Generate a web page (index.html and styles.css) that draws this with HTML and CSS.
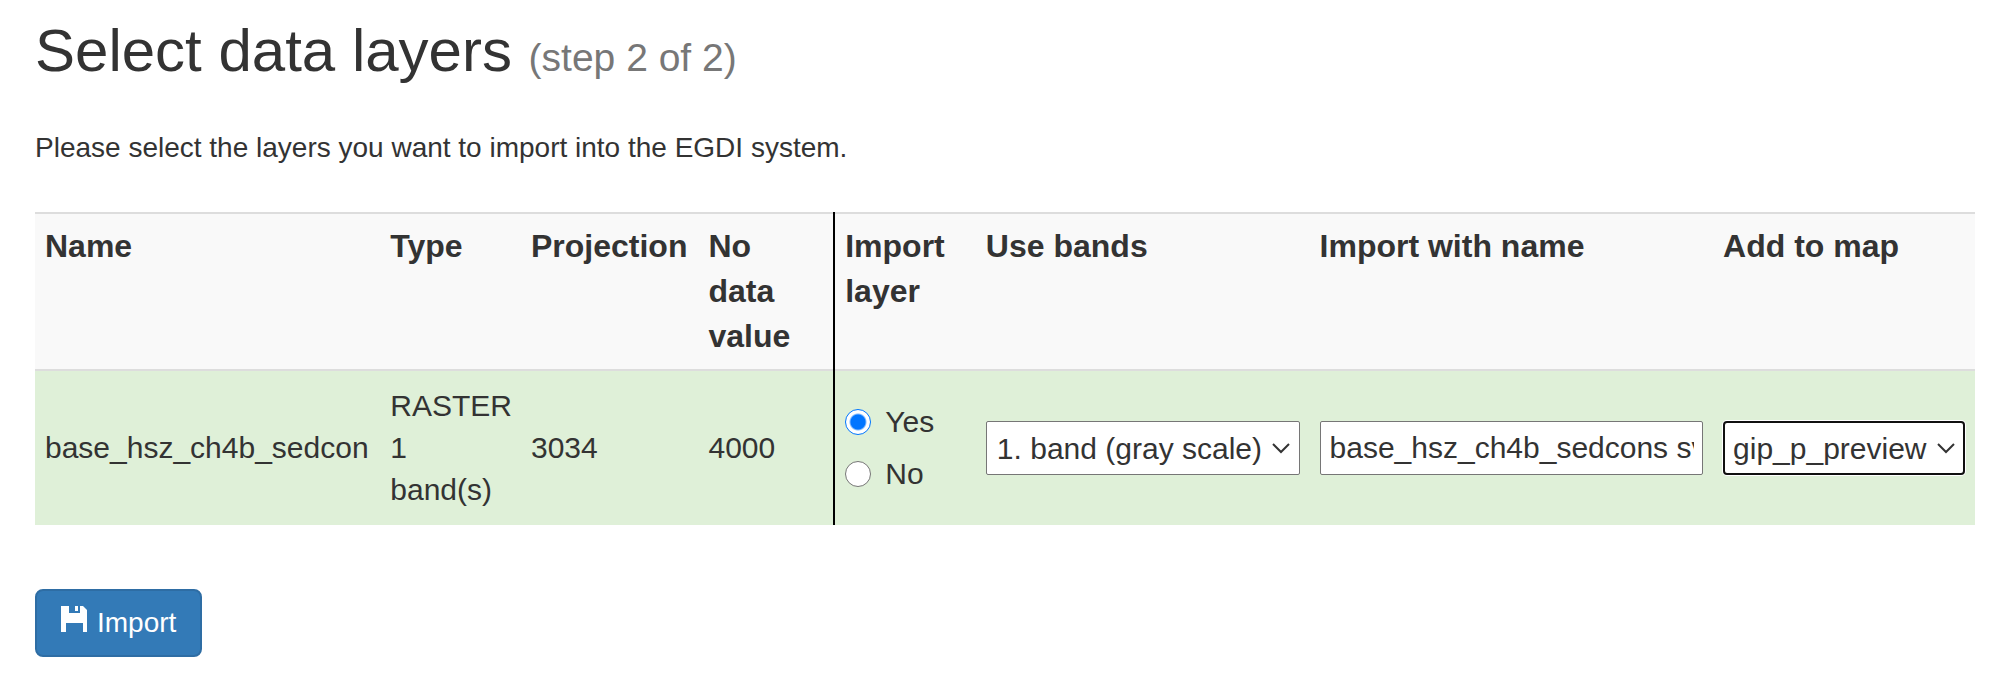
FILE: index.html
```html
<!DOCTYPE html>
<html lang="en">
<head>
<meta charset="utf-8">
<title>Select data layers</title>
<link rel="stylesheet" href="styles.css">
</head>
<body>
<main class="page">
  <h1 class="title">Select data layers <small class="step">(step 2 of 2)</small></h1>
  <p class="intro">Please select the layers you want to import into the EGDI system.</p>
  <form class="layers-form">
    <table class="layers">
      <colgroup>
        <col class="col-name"><col class="col-type"><col class="col-projection"><col class="col-nodata">
        <col class="col-import"><col class="col-bands"><col class="col-newname"><col class="col-map">
      </colgroup>
      <thead>
        <tr>
          <th scope="col">Name</th>
          <th scope="col">Type</th>
          <th scope="col">Projection</th>
          <th scope="col" class="divider">No data value</th>
          <th scope="col">Import layer</th>
          <th scope="col" id="bands-head">Use bands</th>
          <th scope="col" id="newname-head">Import with name</th>
          <th scope="col" id="map-head">Add to map</th>
        </tr>
      </thead>
      <tbody>
        <tr class="selected">
          <td>base_hsz_ch4b_sedcon</td>
          <td>RASTER<br>1 band(s)</td>
          <td>3034</td>
          <td class="divider">4000</td>
          <td>
            <label class="choice"><input class="radio" type="radio" name="import" value="yes" checked>Yes</label>
            <label class="choice"><input class="radio" type="radio" name="import" value="no">No</label>
          </td>
          <td>
            <select class="field select" aria-labelledby="bands-head">
              <option>1. band (gray scale)</option>
            </select>
          </td>
          <td><input class="field" type="text" aria-labelledby="newname-head" value="base_hsz_ch4b_sedcons sv"></td>
          <td>
            <select class="field select active" aria-labelledby="map-head">
              <option>gip_p_preview</option>
            </select>
          </td>
        </tr>
      </tbody>
    </table>
    <button class="import-button" type="button">
      <svg class="save-icon" viewBox="0 0 26 26" aria-hidden="true"><path d="M0 0H8V7H19V0H22L26 4V26H22V17H5V26H0ZM14 0H17V5H14Z"/></svg>
      <span>Import</span>
    </button>
  </form>
</main>
</body>
</html>
```
FILE: styles.css
```css
* {
  box-sizing: border-box;
}

body {
  margin: 0;
  background: #fff;
  color: #333;
  font-family: "Liberation Sans", Arial, sans-serif;
  font-size: 28px;
  line-height: 40px;
}

.page {
  padding: 18px 21px 24px 35px;
}

.title {
  margin: 0 0 44px;
  font-size: 60px;
  font-weight: 400;
  line-height: 66px;
}

.step {
  color: #777;
  font-size: 39px;
  line-height: 39px;
}

.intro {
  margin: 0 0 44px;
}

.layers {
  width: 100%;
  margin-bottom: 64px;
  border-spacing: 0;
  table-layout: fixed;
  font-size: 30px;
  line-height: 42px;
}

.col-name { width: 17.8%; }
.col-type { width: 7.25%; }
.col-projection { width: 9.15%; }
.col-nodata { width: 7.05%; }
.col-import { width: 7.25%; }
.col-bands { width: 17.2%; }
.col-newname { width: 20.8%; }
.col-map { width: 13.5%; }

.layers th {
  padding: 10px;
  border-top: 2px solid #ddd;
  background: #f9f9f9;
  font-size: 32px;
  line-height: 45px;
  text-align: left;
  vertical-align: top;
}

.layers td {
  padding: 14px 10px;
  border-top: 2px solid #ddd;
  vertical-align: middle;
}

.selected td {
  background: #dff0d8;
}

/* Drawn over the row borders so that the line is unbroken. */
.divider {
  position: relative;
}

.divider::after {
  content: "";
  position: absolute;
  top: -2px;
  right: 0;
  bottom: 0;
  width: 2px;
  background: #000;
}

.choice {
  display: flex;
  align-items: center;
  gap: 14px;
  height: 52px;
}

.radio {
  flex: none;
  width: 26px;
  height: 26px;
  margin: 0;
  appearance: none;
  border: 1px solid #767676;
  border-radius: 50%;
  background: #fff;
}

.radio:checked {
  border-color: #0075ff;
  background: radial-gradient(circle, #0075ff 0 7px, #fff 9px);
}

.field {
  display: block;
  width: 100%;
  height: 54px;
  margin: 0;
  padding: 0 8px 0 9px;
  border: 1px solid #767676;
  border-radius: 2px;
  background: #fff;
  color: #333;
  font: inherit;
}

.select {
  appearance: none;
  padding: 2px 8px 0 10px;
  background: #fff url("data:image/svg+xml,%3Csvg xmlns='http://www.w3.org/2000/svg' width='18' height='11' fill='none' stroke='%23333' stroke-width='2'%3E%3Cpath d='M1 1l8 8 8-8'/%3E%3C/svg%3E") no-repeat right 9px center;
}

.select.active {
  padding-left: 8px;
  border: 2px solid #101010;
  border-radius: 4px;
  background-position: right 8px center;
  box-shadow: 0 0 0 1px #fff;
}

.import-button {
  display: flex;
  align-items: center;
  gap: 10px;
  height: 68px;
  padding: 0 24px;
  border: 2px solid #2e6da4;
  border-radius: 8px;
  background: #337ab7;
  color: #fff;
  font: inherit;
}

.save-icon {
  width: 26px;
  height: 34px;
  padding-bottom: 8px;
  fill: currentColor;
}
```
